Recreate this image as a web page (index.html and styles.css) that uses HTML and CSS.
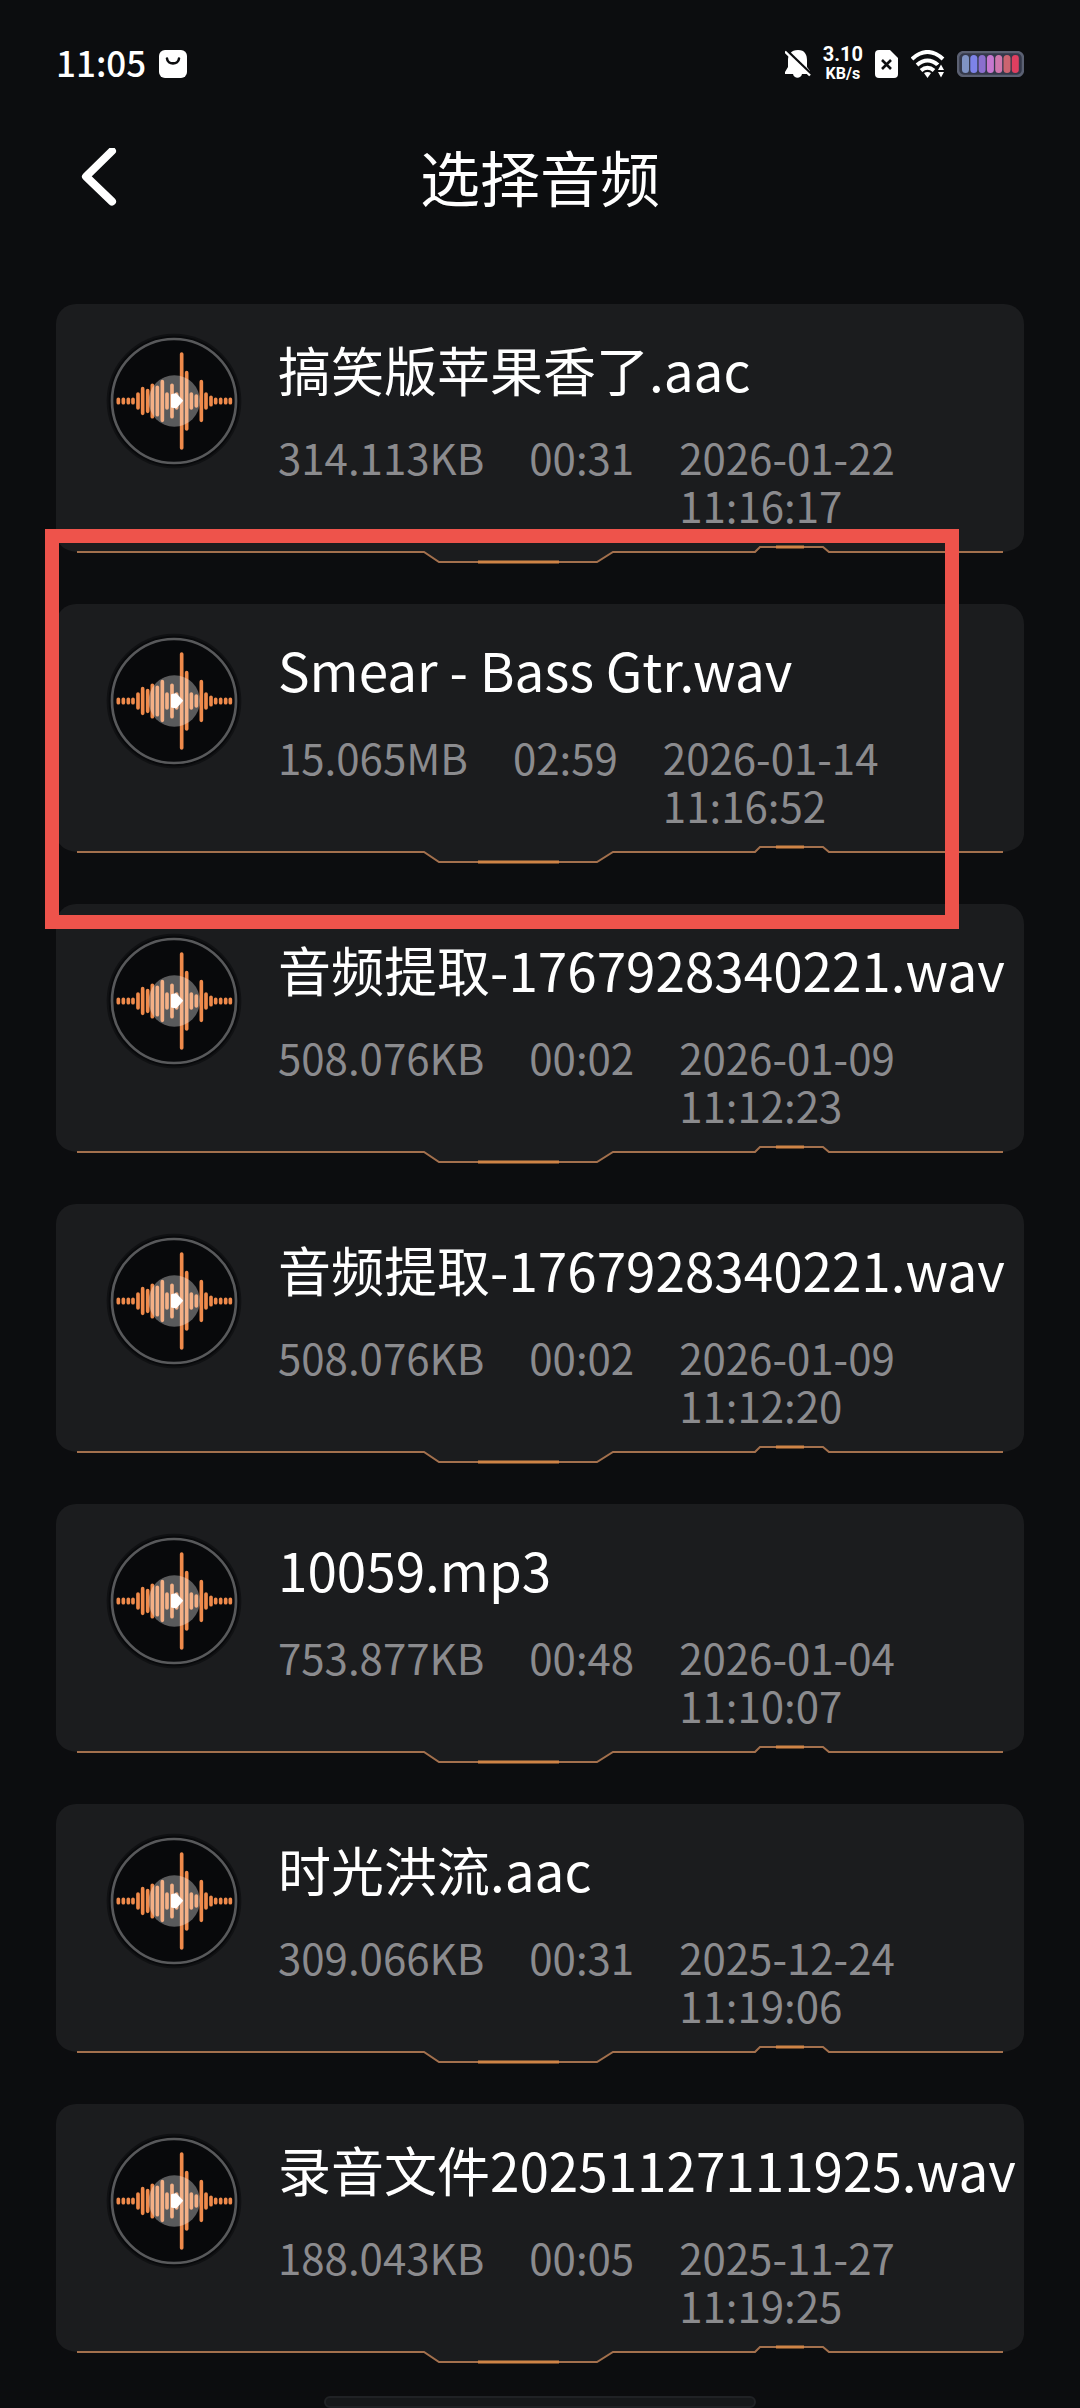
FILE: index.html
```html
<!DOCTYPE html>
<html lang="zh-CN">

<head>
	<meta charset="UTF-8">
	<meta name="viewport" content="width=device-width, initial-scale=1.0">
	<title>选择音频</title>
	<link rel="stylesheet" href="styles.css">
</head>

<body>
	<!-- Shared drawings, used by every row of the list -->
	<svg class="sprite" aria-hidden="true">
		<symbol id="cover" viewBox="45 35 414 414">
			<circle cx="252" cy="242" r="202" fill="#101113" />
			<circle cx="252" cy="242" r="196" fill="#08090b" />
			<circle cx="252" cy="242" r="186" fill="none" stroke="#58595b" stroke-width="8" />
			<g stroke="#ef8a4b" stroke-width="11" stroke-linecap="round">
				<path d="M85 237v10M100 237v10M115 237v10M129 237v10M144 221v42M158 205v74M173 211v62M187 195v94M202 201v82M217 184v116M231 221v42M246 195v94M260 221v42M275 101v282M290 157v169M304 221v42M319 227v30M334 184v116M348 221v42M363 231v22M377 237v10M392 237v10M407 237v10M421 237v10" />
			</g>
			<circle cx="253" cy="242" r="77" fill="#fff" fill-opacity="0.33" />
			<path d="M246 224L258 222L276 241L258 261L246 259Z" fill="#fff" stroke="#fff" stroke-width="6" stroke-linejoin="round" />
		</symbol>
		<symbol id="edge" viewBox="0 0 968 32" preserveAspectRatio="none">
			<path d="M0 0V3Q2 18 21 20H368L383 30H541L557 20H699L704 15H767L773 20H947Q966 18 968 3V0Z" fill="#1b1c1e" />
			<path d="M21 20H368L383 30H541L557 20H699L704 15H767L773 20H947" fill="none" stroke="#a3704d" stroke-width="2" />
			<path d="M422 30H503M720 15H748" stroke="#cf8446" stroke-width="3" />
		</symbol>
	</svg>

	<div class="status-bar">
		<div class="status-left">
			<span class="clock">11:05</span>
			<svg width="28" height="28" viewBox="0 0 28 28">
				<rect width="28" height="28" rx="6" fill="#fff" />
				<path d="M8 8.500C8.500 15 19.500 15 20 8.500" fill="none" stroke="#0c0d0f" stroke-width="2.600" stroke-linecap="round" />
			</svg>
		</div>
		<div class="status-right">
			<svg width="26" height="28" viewBox="0 0 26 28">
				<path d="M13 0C6 0 3 5 3 10V17L0 22V24H8C9 29 16 29 17 24H25V21L22 17V10C22 5 20 0 13 0Z" fill="#fff" />
				<path d="M0 -1L27 25" stroke="#0c0d0f" stroke-width="3" />
				<path d="M0 1.500L25 25.500" stroke="#fff" stroke-width="2.400" />
			</svg>
			<div class="speed">
				<span class="speed-value">3.10</span>
				<span class="speed-unit">KB/s</span>
			</div>
			<svg width="24" height="28" viewBox="0 0 24 28">
				<path d="M4 0H15L23 8V24Q23 28 19 28H4Q0 28 0 24V4Q0 0 4 0Z" fill="#fff" />
				<path d="M7 10L16 19M16 10L7 19" stroke="#0c0d0f" stroke-width="2.600" />
			</svg>
			<svg width="34" height="28" viewBox="0 0 34 28">
				<g fill="none" stroke="#fff" stroke-width="4">
					<path d="M1 9Q16.500 -5 32 9" />
					<path d="M6 15Q16.500 6 27 15" />
					<path d="M10 20.500Q16.500 15 23 20.500" />
				</g>
				<path d="M13 23Q16.500 21 20 23L16.500 28Z" fill="#fff" />
				<path d="M25 20V16L30 13L34 18V28H25Z" fill="#0c0d0f" />
				<path d="M27 20L30 14.500L33 20ZM27 22L30 27.500L33 22Z" fill="#fff" />
			</svg>
			<svg width="67" height="26" viewBox="0 0 67 26">
				<rect x="1" y="1" width="65" height="24" rx="6" fill="#34384a" stroke="#5b6072" stroke-width="2.500" />
				<g stroke-width="7" stroke-linecap="round">
					<path d="M8.500 7.500V18.500" stroke="#7f93c4" />
					<path d="M16.800 7.500V18.500" stroke="#7d83e8" />
					<path d="M25.100 7.500V18.500" stroke="#8b6fce" />
					<path d="M33.400 7.500V18.500" stroke="#c678d0" />
					<path d="M41.700 7.500V18.500" stroke="#cf77ad" />
					<path d="M50 7.500V18.500" stroke="#cb6470" />
					<path d="M58.300 7.500V18.500" stroke="#df3f60" />
				</g>
			</svg>
		</div>
	</div>

	<header class="header">
		<button class="back" type="button" aria-label="返回">
			<svg width="40" height="64" viewBox="0 0 40 64">
				<path d="M32 3L6 28.500L32 53.500" fill="none" stroke="#fff" stroke-width="8" stroke-linecap="round" stroke-linejoin="round" />
			</svg>
		</button>
		<h1 class="header-title">选择音频</h1>
	</header>

	<main>
		<ul class="list">
			<li class="card">
				<div class="card-body">
					<svg class="cover"><use href="#cover" /></svg>
					<div class="info">
						<h2 class="name">搞笑版苹果香了.aac</h2>
						<div class="details">
							<span>314.113KB</span>
							<span>00:31</span>
							<span class="date">2026-01-22 11:16:17</span>
						</div>
					</div>
				</div>
				<svg class="edge"><use href="#edge" /></svg>
			</li>
			<li class="card">
				<div class="card-body">
					<svg class="cover"><use href="#cover" /></svg>
					<div class="info">
						<h2 class="name">Smear - Bass Gtr.wav</h2>
						<div class="details">
							<span>15.065MB</span>
							<span>02:59</span>
							<span class="date">2026-01-14 11:16:52</span>
						</div>
					</div>
				</div>
				<svg class="edge"><use href="#edge" /></svg>
				<!-- red frame round the marked file -->
				<div class="marker"></div>
			</li>
			<li class="card">
				<div class="card-body">
					<svg class="cover"><use href="#cover" /></svg>
					<div class="info">
						<h2 class="name">音频提取-1767928340221.wav</h2>
						<div class="details">
							<span>508.076KB</span>
							<span>00:02</span>
							<span class="date">2026-01-09 11:12:23</span>
						</div>
					</div>
				</div>
				<svg class="edge"><use href="#edge" /></svg>
			</li>
			<li class="card">
				<div class="card-body">
					<svg class="cover"><use href="#cover" /></svg>
					<div class="info">
						<h2 class="name">音频提取-1767928340221.wav</h2>
						<div class="details">
							<span>508.076KB</span>
							<span>00:02</span>
							<span class="date">2026-01-09 11:12:20</span>
						</div>
					</div>
				</div>
				<svg class="edge"><use href="#edge" /></svg>
			</li>
			<li class="card">
				<div class="card-body">
					<svg class="cover"><use href="#cover" /></svg>
					<div class="info">
						<h2 class="name">10059.mp3</h2>
						<div class="details">
							<span>753.877KB</span>
							<span>00:48</span>
							<span class="date">2026-01-04 11:10:07</span>
						</div>
					</div>
				</div>
				<svg class="edge"><use href="#edge" /></svg>
			</li>
			<li class="card">
				<div class="card-body">
					<svg class="cover"><use href="#cover" /></svg>
					<div class="info">
						<h2 class="name">时光洪流.aac</h2>
						<div class="details">
							<span>309.066KB</span>
							<span>00:31</span>
							<span class="date">2025-12-24 11:19:06</span>
						</div>
					</div>
				</div>
				<svg class="edge"><use href="#edge" /></svg>
			</li>
			<li class="card">
				<div class="card-body">
					<svg class="cover"><use href="#cover" /></svg>
					<div class="info">
						<h2 class="name">录音文件20251127111925.wav</h2>
						<div class="details">
							<span>188.043KB</span>
							<span>00:05</span>
							<span class="date">2025-11-27 11:19:25</span>
						</div>
					</div>
				</div>
				<svg class="edge"><use href="#edge" /></svg>
			</li>
		</ul>
	</main>

	<div class="home-bar"></div>
</body>

</html>
```
FILE: styles.css
```css
* {
	box-sizing: border-box;
}

body {
	margin: 0;
	background-color: #0c0d0f;
	color: white;
	font-family: "Noto Sans CJK SC", "Noto Sans", sans-serif;
}

svg {
	display: block;
	flex: none;
}

.sprite {
	position: absolute;
	width: 0;
	height: 0;
}

/* status bar */
.status-bar {
	display: flex;
	justify-content: space-between;
	align-items: center;
	height: 128px;
	padding: 0 56px;
}

.status-left {
	display: flex;
	align-items: center;
	gap: 13px;
}

.clock {
	padding-bottom: 4px;
	font-size: 35px;
	font-weight: 500;
	line-height: 40px;
}

.status-right {
	display: flex;
	align-items: center;
	gap: 12px;
}

.speed {
	display: flex;
	flex-direction: column;
	align-items: center;
	font-family: Roboto, sans-serif;
	font-weight: 700;
	line-height: 20px;
}

.speed-value {
	font-size: 20px;
}

.speed-unit {
	font-size: 16px;
}

/* page header */
.header {
	display: grid;
	grid-template-columns: 1fr auto 1fr;
	align-items: center;
	height: 104px;
	margin-bottom: 72px;
	padding: 0 80px;
}

.back {
	justify-self: start;
	padding: 0;
	border: none;
	background: none;
	cursor: pointer;
}

.header-title {
	margin: 0 0 8px;
	font-size: 60px;
	font-weight: 400;
	line-height: 80px;
}

/* audio list */
.list {
	display: flex;
	flex-direction: column;
	gap: 40px;
	margin: 0;
	padding: 0 56px;
	list-style: none;
}

.card {
	position: relative;
}

.card-body {
	display: flex;
	gap: 35px;
	padding: 28px 0 3px 49px;
	border-radius: 20px 20px 0 0;
	background-color: #1b1c1e;
}

.cover {
	width: 138px;
	height: 138px;
}

.info {
	flex: 1;
	min-width: 0;
}

.name {
	margin: 1px 0 28px;
	font-size: 53px;
	font-weight: 400;
	line-height: 72px;
	white-space: nowrap;
}

.details {
	display: flex;
	gap: 45px;
	color: #8b8b8e;
	font-size: 42px;
	line-height: 48px;
	white-space: nowrap;
}

.date {
	flex: 1;
	white-space: normal;
}

.edge {
	width: 100%;
	height: 32px;
}

.marker {
	position: absolute;
	z-index: 1;
	top: -75px;
	right: 65px;
	bottom: -65px;
	left: -11px;
	border: 14px solid #ee534b;
}

.home-bar {
	width: 40%;
	height: 12px;
	margin: 32px auto 0;
	border: 2px solid #202225;
	border-radius: 6px;
	background-color: #16181a;
}
```
